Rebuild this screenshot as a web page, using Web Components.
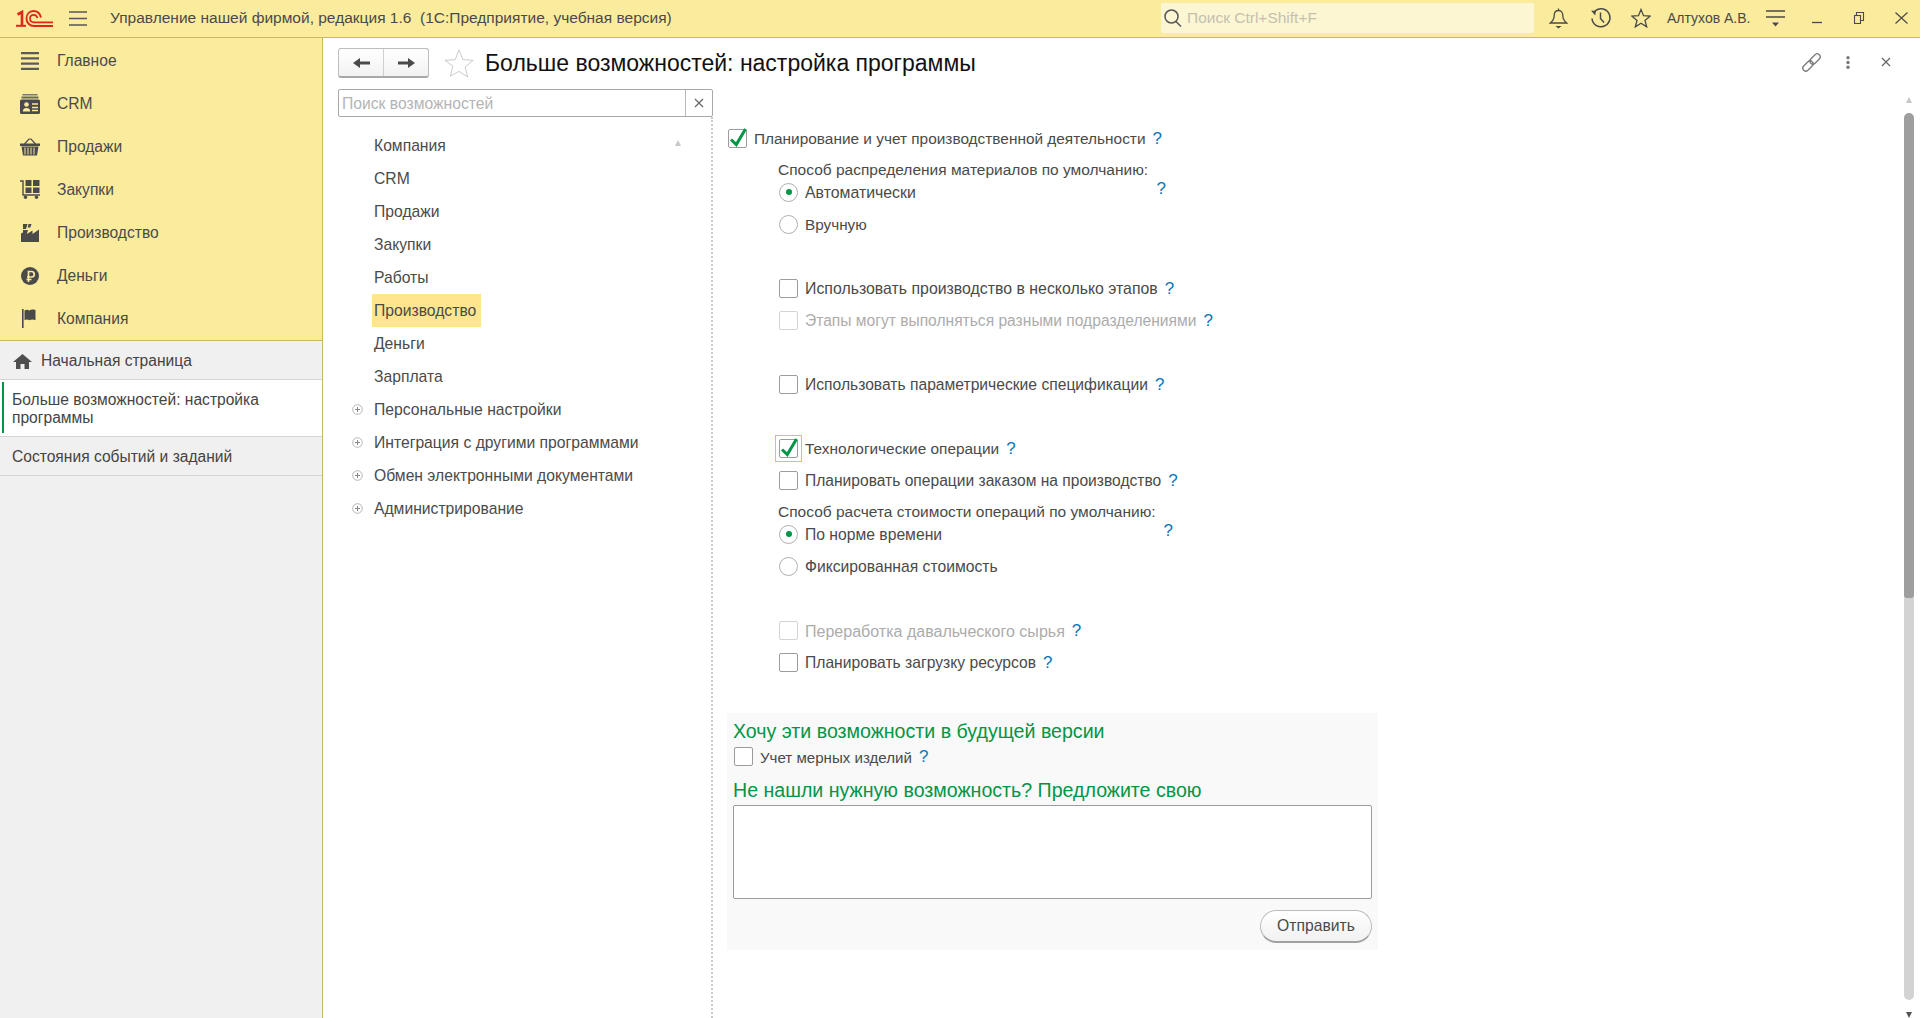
<!DOCTYPE html>
<html lang="ru">
<head>
<meta charset="utf-8">
<title>1C</title>
<style>
  html, body { margin: 0; height: 100%; overflow: hidden; background: #fff; }
  body { font-family: "Liberation Sans", Arial, sans-serif; font-size: 15.6px; color: #4b4b4b; }
</style>
</head>
<body>
<app-shell></app-shell>

<script>
const ICONS = {
  logo: '<svg width="37" height="17" viewBox="0 0 37 17" fill="none" stroke="#e0261c"><path d="M1.500 4.500L6 2V16" stroke-width="2.600"/><path d="M0 15.800h10" stroke-width="2"/><path d="M25 7.500C24 3.500 21 1 17.500 1 13 1 10.500 4.500 10.500 8.500S13.500 16 18 16H37" stroke-width="1.900"/><path d="M21.500 8C21 6 19.500 4.800 17.800 4.800 15.500 4.800 14 6.500 14 8.500S15.500 12.300 18 12.300H37" stroke-width="1.700"/></svg>',
  burger: '<svg width="18" height="15" viewBox="0 0 18 15"><path d="M0 1h18M0 7.500h18M0 14h18" stroke="#555" stroke-width="1.300"/></svg>',
  search: '<svg width="18" height="18" viewBox="0 0 18 18" fill="none" stroke="#555" stroke-width="1.500"><circle cx="7.500" cy="7.500" r="6.500"/><path d="M12 12.500l5 5"/></svg>',
  bell: '<svg width="19" height="21" viewBox="0 0 19 21" fill="none" stroke="#4a4a4a" stroke-width="1.300"><path d="M9.500 .5v2M9.500 2.500c-3.200 0-4.300 2.400-4.300 5 0 3.500-1.500 5.500-3.900 7.500h16.400c-2.400-2-3.900-4-3.900-7.500 0-2.600-1.100-5-4.300-5z"/><path d="M6.500 18h6l-3 2.500z" fill="#4a4a4a" stroke="none"/></svg>',
  history: '<svg width="21" height="20" viewBox="0 0 21 20" fill="none" stroke="#4a4a4a" stroke-width="1.500"><path d="M4.500 3.500a9 9 0 1 1-2.500 7"/><path d="M1 2.500l5 .5-.8 4.500z" fill="#4a4a4a" stroke="none"/><path d="M10.500 4.500v6l3.500 4"/></svg>',
  star: '<svg width="20" height="20" viewBox="0 0 20 20" fill="none" stroke="#4a4a4a" stroke-width="1.300"><path d="M10 1.500l2.500 6.200 6.700.4-5.200 4.300 1.700 6.500-5.700-3.600-5.700 3.600 1.700-6.500L.8 8.100l6.700-.4z"/></svg>',
  funcs: '<svg width="19" height="17" viewBox="0 0 19 17"><path d="M0 1h19M0 7h19" stroke="#4a4a4a" stroke-width="1.400" fill="none"/><path d="M6 12.500h7l-3.500 4z" fill="#4a4a4a"/></svg>',
  minimize: '<svg width="12" height="12" viewBox="0 0 12 12"><path d="M1 10.500h10" stroke="#4a4a4a" stroke-width="1.300"/></svg>',
  restore: '<svg width="12" height="12" viewBox="0 0 12 12" fill="none" stroke="#4a4a4a" stroke-width="1.100"><rect x="1.500" y="3.500" width="6" height="8"/><path d="M3.500 3.500V.5h7v8h-3"/></svg>',
  close: '<svg width="13" height="12" viewBox="0 0 13 12"><path d="M.5.5l12 11M12.500.5L.5 11.500" stroke="#4a4a4a" stroke-width="1.200"/></svg>',
  list: '<svg width="18" height="18" viewBox="0 0 18 18"><path d="M0 1.200h18M0 6.400h18M0 11.600h18M0 16.800h18" stroke="#5a5a5a" stroke-width="2.300"/></svg>',
  crm: '<svg width="20" height="20" viewBox="0 0 20 20"><path d="M2.500 0h15v1.500h-15z" fill="#7a7a6a"/><path d="M1.500 2.500h17v2h-17z" fill="#666"/><rect y="5.500" width="20" height="14.500" rx="1.500" fill="#4a4a4a"/><circle cx="6.500" cy="10.500" r="2.300" fill="#fbeb9d"/><path d="M2.800 17.500c0-2.500 1.500-3.500 3.700-3.500s3.700 1 3.700 3.500z" fill="#fbeb9d"/><path d="M12 10h6M12 13.500h6M12 16.500h6" stroke="#fbeb9d" stroke-width="1.400"/></svg>',
  basket: '<svg width="20" height="18" viewBox="0 0 20 18"><path d="M4.500 6L9 1h2l4.500 5" fill="none" stroke="#4a4a4a" stroke-width="1.200"/><path d="M0 5.500h20V8H0z" fill="#4a4a4a"/><path d="M1.500 8.500h17L17 17.500H3z" fill="#4a4a4a"/><path d="M5 9.500v7M8 9.500v7M11 9.500v7M14 9.500v7" stroke="#fbeb9d" stroke-width="1"/></svg>',
  cart: '<svg width="20" height="19" viewBox="0 0 20 19"><path d="M0 1h3v14h17" fill="none" stroke="#4a4a4a" stroke-width="1.400"/><path d="M5.500 0h6v6h-6zM13 0h6.500v6H13zM5.500 7.500h6V13h-6zM13 7.500h6.500V13H13z" fill="#4a4a4a"/><circle cx="5.500" cy="17.300" r="1.700" fill="#4a4a4a"/><circle cx="16.500" cy="17.300" r="1.700" fill="#4a4a4a"/></svg>',
  factory: '<svg width="18" height="18" viewBox="0 0 18 18"><path d="M2 0h4.500L5 5H2zM7.500 0h3L9.300 3.500H6.700z" fill="#4a4a4a"/><path d="M0 18V9.500l2-1V6l5 0L5.800 10l5.700-3.500V10L18 5.500V18z" fill="#4a4a4a"/></svg>',
  money: '<svg width="18" height="18" viewBox="0 0 18 18"><circle cx="9" cy="9" r="9" fill="#4a4a4a"/><path d="M7.500 15V4.500h3a2.700 2.700 0 0 1 0 5.500h-4.500M5.500 12.500h5" fill="none" stroke="#fbeb9d" stroke-width="1.700"/></svg>',
  flag: '<svg width="16" height="19" viewBox="0 0 16 19"><path d="M.8 0v19" stroke="#4a4a4a" stroke-width="1.600"/><path d="M2.500 1.500c2-1.300 3.500-1 5 0 1.500-1 3-1.300 6-.5v10c-2.500-.8-4.500-.8-6 .2-1.500-1-3-1-5-.2z" fill="#4a4a4a"/></svg>',
  home: '<svg width="19" height="15" viewBox="0 0 19 15"><path d="M9.500 0L0 8h3v7h4.500v-5h4v5H16V8h3z" fill="#4f4f4f"/></svg>',
  left: '<svg width="17" height="10" viewBox="0 0 17 10"><path d="M17 5H6" stroke="#4a4a4a" stroke-width="3"/><path d="M7 0v10L0 5z" fill="#4a4a4a"/></svg>',
  right: '<svg width="17" height="10" viewBox="0 0 17 10"><path d="M0 5h11" stroke="#4a4a4a" stroke-width="3"/><path d="M10 0v10l7-5z" fill="#4a4a4a"/></svg>',
  bigstar: '<svg width="30" height="28" viewBox="0 0 34 31" preserveAspectRatio="none" fill="none" stroke="#c4c4c4" stroke-width="1"><path d="M17 1l4.300 10.800 11.700.7-9.100 7.500 3 11-9.900-6.200L7.100 30l3-11L1 12.500l11.700-.7z"/></svg>',
  link: '<svg width="19" height="19" viewBox="0 0 19 19" fill="none" stroke="#7a7a7a" stroke-width="1.300"><g transform="rotate(-45 9.500 9.500)"><rect x="-1.500" y="6.500" width="12" height="6" rx="3"/><rect x="8.500" y="6.500" width="12" height="6" rx="3"/></g></svg>',
  dots: '<svg width="4" height="13" viewBox="0 0 4 13"><circle cx="2" cy="1.800" r="1.700" fill="#7a7a7a"/><circle cx="2" cy="6.500" r="1.700" fill="#7a7a7a"/><circle cx="2" cy="11.200" r="1.700" fill="#7a7a7a"/></svg>',
  x: '<svg width="10" height="10" viewBox="0 0 10 10"><path d="M1 1l8 8M9 1L1 9" stroke="#666" stroke-width="1.200"/></svg>',
  plus: '<svg width="11" height="11" viewBox="0 0 11 11" fill="none"><circle cx="5.500" cy="5.500" r="4.800" stroke="#b5b5b5"/><path d="M3 5.500h5M5.500 3v5" stroke="#888"/></svg>',
  check: '<svg width="20" height="20" viewBox="0 0 20 20" style="overflow:visible"><path d="M3 10.500l5.300 5L17.500 0" fill="none" stroke="#009646" stroke-width="3"/></svg>'
};

class AppShell extends HTMLElement {
  constructor() {
    super();
    this.attachShadow({ mode: "open" }).innerHTML = `
    <style>
      :host { display: grid; grid-template-rows: 38px 1fr; height: 1018px; overflow: hidden; }
      .body { display: grid; grid-template-columns: 323px 1fr; min-height: 0; }
    </style>
    <top-bar></top-bar>
    <div class="body">
      <side-panel></side-panel>
      <feature-page></feature-page>
    </div>`;
  }
}

class TopBar extends HTMLElement {
  constructor() {
    super();
    this.attachShadow({ mode: "open" }).innerHTML = `
    <style>
      :host { display: flex; align-items: center; box-sizing: border-box; height: 38px; background: #fbeb9d; border-bottom: 1px solid #c9b763; color: #4a4a4a; font-size: 15.5px; padding: 0 3px 1px 0; }
      .logo { display: flex; margin-left: 16px; width: 37px; }
      .burger { display: flex; margin-left: 16px; }
      .title { margin-left: 23px; white-space: pre; flex: 1; }
      .find { display: flex; align-items: center; box-sizing: border-box; width: 373px; height: 30px; padding-left: 3px; background: #fcf6d3; border-radius: 2px; color: #c4c1ae; }
      .find span { margin-left: 5px; }
      .i { display: flex; justify-content: center; align-items: center; }
    </style>
    <span class="logo">${ICONS.logo}</span>
    <span class="burger i">${ICONS.burger}</span>
    <span class="title">Управление нашей фирмой, редакция 1.6  (1С:Предприятие, учебная версия)</span>
    <div class="find">${ICONS.search}<span>Поиск Ctrl+Shift+F</span></div>
    <span class="i" style="width:48px">${ICONS.bell}</span>
    <span class="i" style="width:36px">${ICONS.history}</span>
    <span class="i" style="width:46px">${ICONS.star}</span>
    <span style="margin-left:3px;width:82px;white-space:nowrap;font-size:14px">Алтухов А.В.</span>
    <span class="i" style="width:52px">${ICONS.funcs}</span>
    <span class="i" style="width:32px">${ICONS.minimize}</span>
    <span class="i" style="width:52px">${ICONS.restore}</span>
    <span class="i" style="width:32px">${ICONS.close}</span>`;
  }
}

class NavItem extends HTMLElement {
  constructor() {
    super();
    this.attachShadow({ mode: "open" }).innerHTML = `
    <style>
      :host { display: flex; align-items: center; height: 43px; padding-left: 20px; color: #4a4a4a; }
      .ico { display: flex; justify-content: center; width: 20px; margin-right: 17px; }
    </style>
    <span class="ico">${ICONS[this.getAttribute("icon")]}</span>
    <slot></slot>`;
  }
}

class OpenTab extends HTMLElement {
  constructor() {
    super();
    this.attachShadow({ mode: "open" }).innerHTML = `
    <style>
      :host { display: flex; align-items: center; box-sizing: border-box; min-height: 39px; padding: 2px 12px 0; border-bottom: 1px solid #d4d4d4; line-height: 18px; color: #444; }
      :host([active]) { background: #fff; height: 57px; position: relative; }
      :host([active])::before { content: ""; position: absolute; left: 2px; top: 2px; bottom: 3px; width: 2px; background: #00964a; }
      .ico { display: flex; margin: 0 9px 0 1px; }
    </style>
    ${this.hasAttribute("home") ? `<span class="ico">${ICONS.home}</span>` : ""}
    <span><slot></slot></span>`;
  }
}

class SidePanel extends HTMLElement {
  constructor() {
    super();
    this.attachShadow({ mode: "open" }).innerHTML = `
    <style>
      :host { display: flex; flex-direction: column; background: #f0f0f0; border-right: 1px solid #c9b763; }
      nav { background: #fbeb9d; border-bottom: 1px solid #c9b763; padding-top: 1px; }
    </style>
    <nav>
      <nav-item icon="list">Главное</nav-item>
      <nav-item icon="crm">CRM</nav-item>
      <nav-item icon="basket">Продажи</nav-item>
      <nav-item icon="cart">Закупки</nav-item>
      <nav-item icon="factory">Производство</nav-item>
      <nav-item icon="money">Деньги</nav-item>
      <nav-item icon="flag">Компания</nav-item>
    </nav>
    <open-tab home>Начальная страница</open-tab>
    <open-tab active>Больше возможностей: настройка программы</open-tab>
    <open-tab>Состояния событий и заданий</open-tab>`;
  }
}

class TreeItem extends HTMLElement {
  constructor() {
    super();
    this.attachShadow({ mode: "open" }).innerHTML = `
    <style>
      :host { display: flex; align-items: center; height: 33px; color: #4a4a4a; font-size: 15.7px; }
      .plus { display: flex; justify-content: center; width: 11px; margin: 0 9px 0 14px; }
      .label { display: flex; align-items: center; height: 33px; padding: 0 3px 0 2px; }
      :host([selected]) .label { background: #fee58e; padding-right: 5px; }
    </style>
    <span class="plus">${this.hasAttribute("group") ? ICONS.plus : ""}</span>
    <span class="label"><slot></slot></span>`;
  }
}

class HelpMark extends HTMLElement {
  constructor() {
    super();
    this.attachShadow({ mode: "open" }).innerHTML = `
    <style>:host { display: inline-block; color: #0b74b8; font-size: 17px; margin-left: 7px; padding-top: 2px; }</style>?`;
  }
}

// один ряд формы: флажок или переключатель с подписью
class OptRow extends HTMLElement {
  constructor() {
    super();
    const type = this.getAttribute("type") || "check";
    const on = this.hasAttribute("on");
    let box = "";
    if (type == "check") box = `<span class="box">${on ? `<span class="tick">${ICONS.check}</span>` : ""}</span>`;
    else box = `<span class="radio">${on ? '<i></i>' : ""}</span>`;
    this.attachShadow({ mode: "open" }).innerHTML = `
    <style>
      :host { display: flex; align-items: center; height: 32px; margin-left: var(--indent, 52px); white-space: nowrap; }
      :host([off]) { color: #acacac; }
      .box, .radio { position: relative; display: block; box-sizing: border-box; flex: none; width: 19px; height: 19px; margin-right: 7px; background: #fff; border: 1px solid #9c9c9c; }
      .box { border-radius: 2px; }
      :host([off]) .box { border-color: #d4d4d4; }
      :host([focus]) .box::after { content: ""; position: absolute; inset: -5px; border: 1px solid #f0c030; }
      .radio { border-radius: 50%; border-color: #b0b0b0; }
      .radio i { position: absolute; left: 5.500px; top: 5.500px; width: 6px; height: 6px; border-radius: 50%; background: #009646; }
      .tick { position: absolute; left: -1px; top: -1px; display: block; }
      .txt { padding-top: 2px; }
    </style>
    ${box}<span class="txt"><slot></slot></span><slot name="help"></slot>`;
  }
}

class FeaturePage extends HTMLElement {
  constructor() {
    super();
    this.attachShadow({ mode: "open" }).innerHTML = `
    <style>
      :host { display: block; position: relative; overflow: hidden; color: #4a4a4a; }
      header { display: flex; align-items: center; height: 30px; margin: 10px 0 0 15px; }
      .arrows { display: flex; box-sizing: border-box; width: 91px; height: 30px; background: linear-gradient(#fff, #f2f2f2); border: 1px solid #bdbdbd; border-bottom: 2px solid #a8a8a8; border-radius: 3px; }
      .arrows span { display: flex; flex: 1; align-items: center; justify-content: center; }
      .arrows span + span { border-left: 1px solid #d0d0d0; }
      .star { display: flex; margin: 0 11px 0 15px; }
      h1 { margin: 0; font-size: 23px; font-weight: normal; color: #111; flex: 1; white-space: nowrap; }
      .tools { display: flex; align-items: center; margin: -2px 29px 0 0; }
      .tools span { display: flex; }
      .search { display: flex; box-sizing: border-box; width: 375px; height: 28px; margin: 11px 0 0 15px; border: 1px solid #a8a8a8; border-radius: 2px; background: #fff; font-size: 15.7px; }
      .search div { flex: 1; padding: 1px 0 0 3px; line-height: 26px; color: #b4b4b4; }
      .search span { display: flex; align-items: center; justify-content: center; width: 26px; border-left: 1px solid #b8b8b8; }
      .cols { display: grid; grid-template-columns: 373px 1fr; margin-left: 15px; height: 901px; }
      .tree { box-sizing: border-box; padding-top: 12px; position: relative; }
      .tree-up { position: absolute; right: 30px; top: 23px; width: 0; height: 0; border: 3px solid transparent; border-top: 0; border-bottom: 6px solid #c8c8c8; }
      .main { border-left: 2px dotted #c9c9c9; padding: 5px 0 0 14px; }
      .cap { height: 22px; line-height: 22px; margin: 5px 0 0 51px; white-space: nowrap; }
      .spacer { height: 32px; }
      .radio-first { height: 22px; width: 387px; }
      .radio-next { margin-top: 5px; }
      .radio-first help-mark { margin: -8px 0 0 auto; }
      .extra { box-sizing: border-box; width: 651px; height: 237px; margin: 35px 0 0 0; padding: 7px 6px 0; background: #f9f9f9; }
      h2 { margin: 0; font-size: 19.600px; line-height: 22px; font-weight: normal; color: #009646; white-space: nowrap; }
      .extra opt-row { --indent: 1px; height: 24px; margin-top: 2px; }
      .extra h2.two { margin-top: 11px; }
      .memo { box-sizing: border-box; width: 639px; height: 94px; margin-top: 4px; background: #fff; border: 1px solid #9c9c9c; border-radius: 2px; }
      .send { display: flex; justify-content: flex-end; margin-top: 11px; }
      .send span { box-sizing: border-box; width: 112px; height: 33px; line-height: 30px; text-align: center; font-size: 15.7px; background: linear-gradient(#fff, #f1f1f1); border: 1px solid #bcbcbc; border-bottom: 2px solid #a0a0a0; border-radius: 17px; }
      .scroll { position: absolute; left: 1581px; top: 75px; width: 10px; height: 887px; }
      .scroll b { display: block; width: 10px; }
      .up, .down { position: absolute; left: 2px; width: 0; height: 0; border: 3px solid transparent; }
    </style>
    <header>
      <div class="arrows"><span>${ICONS.left}</span><span>${ICONS.right}</span></div>
      <span class="star">${ICONS.bigstar}</span>
      <h1>Больше возможностей: настройка программы</h1>
      <div class="tools"><span style="margin-right:25px">${ICONS.link}</span><span style="margin-right:31px">${ICONS.dots}</span><span>${ICONS.x}</span></div>
    </header>
    <div class="search"><div>Поиск возможностей</div><span>${ICONS.x}</span></div>
    <div class="cols">
      <div class="tree">
        <span class="tree-up"></span>
        <tree-item>Компания</tree-item>
        <tree-item>CRM</tree-item>
        <tree-item>Продажи</tree-item>
        <tree-item>Закупки</tree-item>
        <tree-item>Работы</tree-item>
        <tree-item selected>Производство</tree-item>
        <tree-item>Деньги</tree-item>
        <tree-item>Зарплата</tree-item>
        <tree-item group>Персональные настройки</tree-item>
        <tree-item group>Интеграция с другими программами</tree-item>
        <tree-item group>Обмен электронными документами</tree-item>
        <tree-item group>Администрирование</tree-item>
      </div>
      <div class="main">
        <opt-row on style="--indent:1px;font-size:15.4px">Планирование и учет производственной деятельности<help-mark slot="help"></help-mark></opt-row>
        <div class="cap" style="font-size:15.5px">Способ распределения материалов по умолчанию:</div>
        <opt-row class="radio-first" type="radio" on style="font-size:15.85px">Автоматически<help-mark slot="help"></help-mark></opt-row>
        <opt-row class="radio-next" type="radio" style="font-size:15.3px">Вручную</opt-row>
        <div class="spacer"></div>
        <opt-row style="font-size:15.87px">Использовать производство в несколько этапов<help-mark slot="help"></help-mark></opt-row>
        <opt-row off>Этапы могут выполняться разными подразделениями<help-mark slot="help"></help-mark></opt-row>
        <div class="spacer"></div>
        <opt-row style="font-size:15.65px">Использовать параметрические спецификации<help-mark slot="help"></help-mark></opt-row>
        <div class="spacer"></div>
        <opt-row on focus style="font-size:15.4px">Технологические операции<help-mark slot="help"></help-mark></opt-row>
        <opt-row>Планировать операции заказом на производство<help-mark slot="help"></help-mark></opt-row>
        <div class="cap" style="font-size:15.5px">Способ расчета стоимости операций по умолчанию:</div>
        <opt-row class="radio-first" type="radio" on style="width:394px;font-size:15.7px">По норме времени<help-mark slot="help"></help-mark></opt-row>
        <opt-row class="radio-next" type="radio" style="font-size:15.7px">Фиксированная стоимость</opt-row>
        <div class="spacer"></div>
        <opt-row off style="font-size:16.05px">Переработка давальческого сырья<help-mark slot="help"></help-mark></opt-row>
        <opt-row style="font-size:15.66px">Планировать загрузку ресурсов<help-mark slot="help"></help-mark></opt-row>
        <div class="extra">
          <h2>Хочу эти возможности в будущей версии</h2>
          <opt-row style="font-size:15.1px">Учет мерных изделий<help-mark slot="help"></help-mark></opt-row>
          <h2 class="two">Не нашли нужную возможность? Предложите свою</h2>
          <div class="memo"></div>
          <div class="send"><span>Отправить</span></div>
        </div>
      </div>
    </div>
    <div class="scroll">
      <span class="up" style="top:-16px;border-top:0;border-bottom:6px solid #c8c8c8"></span>
      <b style="height:485px;background:#9e9e9e;border-radius:5px 5px 2px 2px"></b>
      <b style="height:402px;background:#d3d3d3;border-radius:0 0 5px 5px"></b>
      <span class="down" style="bottom:-18px;border-bottom:0;border-top:6px solid #555"></span>
    </div>`;
  }
}

customElements.define("top-bar", TopBar);
customElements.define("nav-item", NavItem);
customElements.define("open-tab", OpenTab);
customElements.define("side-panel", SidePanel);
customElements.define("tree-item", TreeItem);
customElements.define("help-mark", HelpMark);
customElements.define("opt-row", OptRow);
customElements.define("feature-page", FeaturePage);
customElements.define("app-shell", AppShell);
</script>
</body>
</html>
